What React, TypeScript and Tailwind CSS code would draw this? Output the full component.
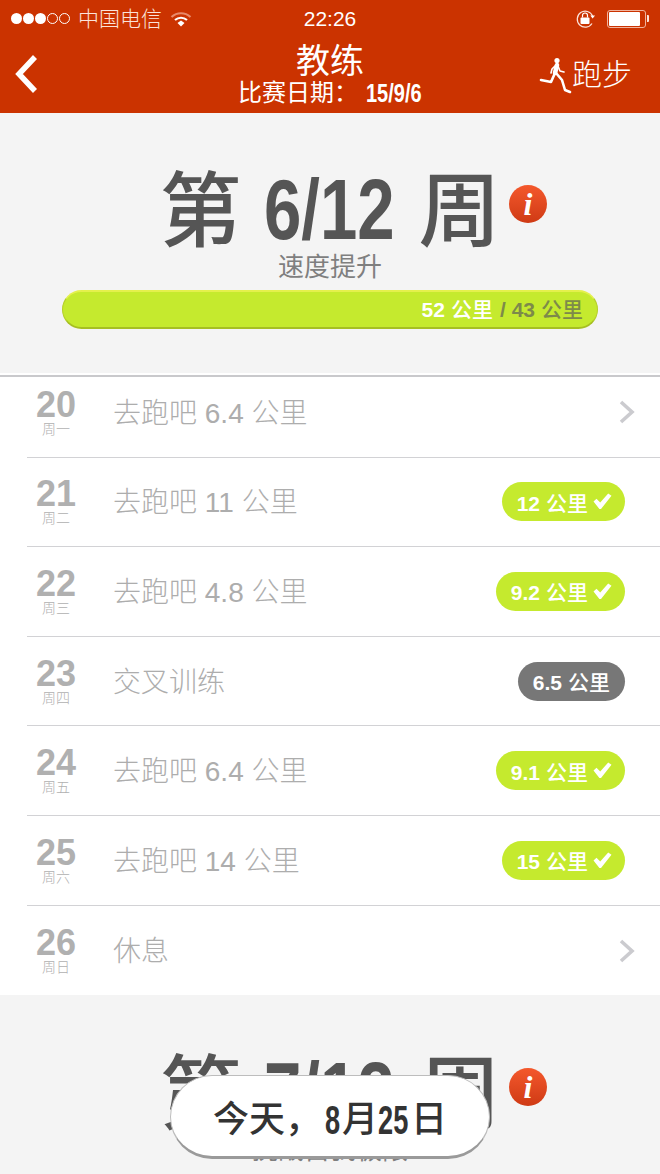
import React from "react";

const SANS = "font-['Liberation_Sans','Noto_Sans_CJK_SC',sans-serif]";

type Day = {
  num: string;
  week: string;
  title: string;
  dist?: string;
  done?: boolean;
};

const days: Day[] = [
  { num: "20", week: "周一", title: "去跑吧 6.4 公里" },
  { num: "21", week: "周二", title: "去跑吧 11 公里", dist: "12", done: true },
  { num: "22", week: "周三", title: "去跑吧 4.8 公里", dist: "9.2", done: true },
  { num: "23", week: "周四", title: "交叉训练", dist: "6.5" },
  { num: "24", week: "周五", title: "去跑吧 6.4 公里", dist: "9.1", done: true },
  { num: "25", week: "周六", title: "去跑吧 14 公里", dist: "15", done: true },
  { num: "26", week: "周日", title: "休息" },
];

function Check() {
  return (
    <svg width="19" height="17" viewBox="0 0 19 17" className="ml-[5px] mb-[3px]">
      <path d="M0.5 8.5 L3.5 5.8 L7.2 9.6 L15.2 0.5 L18.5 2.8 L8 16 L6.4 16 Z" fill="#fff" />
    </svg>
  );
}

function Chevron() {
  return (
    <svg width="16" height="24" viewBox="0 0 16 24" className="mr-[-10px]">
      <path d="M2 2 L13 12 L2 22" fill="none" stroke="#cbcbcf" strokeWidth="3.6" />
    </svg>
  );
}

function InfoIcon() {
  return (
    <div className="absolute left-[509px] top-[72px] flex h-[38px] w-[38px] items-center justify-center rounded-full bg-gradient-to-b from-[#f4582c] to-[#cf3a14] font-['Liberation_Serif',serif] text-[32px] font-bold italic leading-none text-white">
      i
    </div>
  );
}

function WeekHeader({ label, sub }: { label: string; sub: string }) {
  return (
    <div className="relative flex flex-col items-center pt-[49px] text-[#555555]">
      <div className="flex h-[96px] items-center justify-center">
        <span className="mt-[3px] text-[82px] font-medium leading-none">第</span>
        <span className="mb-[2px] ml-[22px] w-[131px] font-['Liberation_Sans',sans-serif] text-[86px] font-bold leading-none">
          <span className="inline-block origin-left scale-x-[0.78] whitespace-nowrap">{label}</span>
        </span>
        <span className="ml-[24px] mt-[3px] text-[82px] font-medium leading-none">周</span>
      </div>
      <div className="mt-[-8px] text-[26px] leading-[34px] text-[#7f7f7f]">{sub}</div>
      <InfoIcon />
    </div>
  );
}

function Runner() {
  return (
    <svg width="34" height="38" viewBox="0 0 34 38" fill="none" stroke="#fff" strokeLinecap="round" strokeLinejoin="round">
      <circle cx="19" cy="4.5" r="2.6" fill="#fff" stroke="none" />
      <path d="M19 9 L17 17" strokeWidth="4.6" />
      <path d="M17 10 L14 13 L13 17" strokeWidth="1.6" />
      <path d="M20 10 L22 15 L26 16" strokeWidth="1.6" />
      <path d="M17 17 L13 26 L3 24" strokeWidth="2.6" />
      <path d="M18 17 L24 24 L27 34 L32 36" strokeWidth="2.6" />
    </svg>
  );
}

function StatusBar() {
  return (
    <div className="grid h-[37px] grid-cols-[1fr_auto_1fr] items-center text-white">
      <div className="flex items-center pl-[11px]">
        <div className="flex gap-[1px]">
          <span className="h-[11px] w-[11px] rounded-full bg-white" />
          <span className="h-[11px] w-[11px] rounded-full bg-white" />
          <span className="h-[11px] w-[11px] rounded-full bg-white" />
          <span className="h-[11px] w-[11px] rounded-full border border-white" />
          <span className="h-[11px] w-[11px] rounded-full border border-white" />
        </div>
        <span className="ml-[8px] text-[21px] font-light leading-none text-[#fbe3da]">中国电信</span>
        <svg width="22" height="16" viewBox="0 0 22 16" className="ml-[8px]" fill="none">
          <path d="M1.5 6 C7 1 15 1 20.5 6" stroke="#e88a6a" strokeWidth="2.2" />
          <path d="M5 9 C8.5 6 13.5 6 17 9" stroke="#fff" strokeWidth="2.2" />
          <path d="M7.5 12 L11 9.6 L14.5 12 L11 15.5 Z" fill="#fff" />
        </svg>
      </div>
      <span className="text-[21px] leading-none">22:26</span>
      <div className="flex items-center justify-end pr-[11px]">
        <svg width="21" height="20" viewBox="0 0 21 20" fill="none">
          <path d="M17 14.5 A8 8 0 1 1 17.6 7" stroke="#fbe3da" strokeWidth="1.2" />
          <path d="M15.3 6.5 H20 L17.6 9.5 Z" fill="#fff" />
          <rect x="5.5" y="8.5" width="9" height="6.5" rx="1" fill="#fff" />
          <path d="M7.5 8.5 V6.5 A2.5 2.5 0 0 1 12.5 6.5 V8.5" stroke="#fff" strokeWidth="1.2" />
        </svg>
        <div className="ml-[11px] flex h-[18px] w-[39px] items-center rounded-[3px] border border-[#f0b39d] p-[1px]">
          <div className="h-full w-[31px] rounded-[1px] bg-white" />
        </div>
        <div className="ml-[1px] h-[7px] w-[2px] rounded-r-[1px] bg-[#fbe3da]" />
      </div>
    </div>
  );
}

function NavBar() {
  return (
    <div className="grid h-[76px] grid-cols-[1fr_auto_1fr] text-white">
      <div className="flex items-start pl-[14px] pt-[17px]">
        <svg width="26" height="40" viewBox="0 0 26 40">
          <path d="M21 3 L5 20 L21 37" fill="none" stroke="#fff" strokeWidth="5.5" />
        </svg>
      </div>
      <div className="flex flex-col items-center pt-[2px]">
        <div className="text-[34px] leading-[44px]">教练</div>
        <div className="mt-[-1px] flex items-center text-[24px] leading-[22px]">
          比赛日期：
          <span className="ml-[8px] w-[56px] font-['Liberation_Sans',sans-serif] text-[25px] font-bold">
            <span className="inline-block origin-left scale-x-[0.8] whitespace-nowrap">15/9/6</span>
          </span>
        </div>
      </div>
      <div className="flex items-start justify-end pr-[28px] pt-[19px]">
        <Runner />
        <span className="text-[30px] font-light leading-[38px]">跑步</span>
      </div>
    </div>
  );
}

function DayRow({ day, first, last }: { day: Day; first: boolean; last: boolean }) {
  return (
    <div className={`pl-[27px] ${first ? "mt-[-9.17px]" : ""}`}>
      <div className={`flex h-[89.67px] items-center pr-[35px] ${last ? "" : "border-b border-[#d2d2d5]"}`}>
        <div className="mr-[28px] mt-[2px] flex w-[58px] flex-col items-center text-[#b0b0b0]">
          <span className="text-[36px] font-bold leading-[31px]">{day.num}</span>
          <span className="mt-[1px] text-[14px] font-light leading-[17px]">{day.week}</span>
        </div>
        <div className="mt-[3px] flex-1 text-[28px] font-light leading-none text-[#adadad]">{day.title}</div>
        {day.dist ? (
          <div
            className={`flex h-[39px] items-center rounded-full pl-[15px] pt-[3px] text-[21px] leading-none text-white ${
              day.done ? "bg-[#c5ea2e] pr-[13px]" : "bg-[#777777] pr-[15px]"
            }`}
          >
            <span className="font-bold">{day.dist}</span>
            <span className="ml-[6px] font-medium">公里</span>
            {day.done && <Check />}
          </div>
        ) : (
          <Chevron />
        )}
      </div>
    </div>
  );
}

export default function App() {
  return (
    <div className={`relative h-[1174px] w-[660px] overflow-hidden bg-[#f4f4f4] ${SANS}`}>
      <div className="bg-[#cb3300]">
        <StatusBar />
        <NavBar />
      </div>

      <section className="h-[262px] border-b-2 border-white">
        <WeekHeader label="6/12" sub="速度提升" />
        <div className="mx-[62px] mt-[6px] flex h-[39px] items-center justify-end rounded-full border-x border-t-2 border-b-2 border-x-[#b5cf28] border-t-[#e4f04c] border-b-[#a6bf22] bg-[#c5ea2e] pr-[14px] text-[21px] leading-none">
          <span className="font-bold text-white">52</span>
          <span className="ml-[6px] font-medium text-white">公里</span>
          <span className="ml-[7px] font-bold text-[#7d8a4a]">/ 43</span>
          <span className="ml-[6px] font-medium text-[#7d8a4a]">公里</span>
        </div>
      </section>

      <section className="overflow-hidden border-t-2 border-[#c9c9cc] bg-white">
        {days.map((day, i) => (
          <DayRow key={day.num} day={day} first={i === 0} last={i === days.length - 1} />
        ))}
      </section>

      <section className="pt-px">
        <WeekHeader label="7/12" sub="挑战自我极限" />
      </section>

      <div className="absolute left-[170px] top-[1075px] flex h-[84px] w-[320px] items-center justify-center rounded-full border border-[#bdbdbd] border-b-[3px] border-b-[#9a9a9a] bg-white pt-[7px] text-[36px] font-medium leading-none text-[#333333]">
        今天，
        <span className="ml-[4px] w-[17px] font-['Liberation_Sans',sans-serif] text-[40px] font-bold">
          <span className="inline-block origin-left scale-x-[0.68]">8</span>
        </span>
        月
        <span className="w-[33px] font-['Liberation_Sans',sans-serif] text-[40px] font-bold">
          <span className="inline-block origin-left scale-x-[0.68]">25</span>
        </span>
        日
      </div>
    </div>
  );
}
